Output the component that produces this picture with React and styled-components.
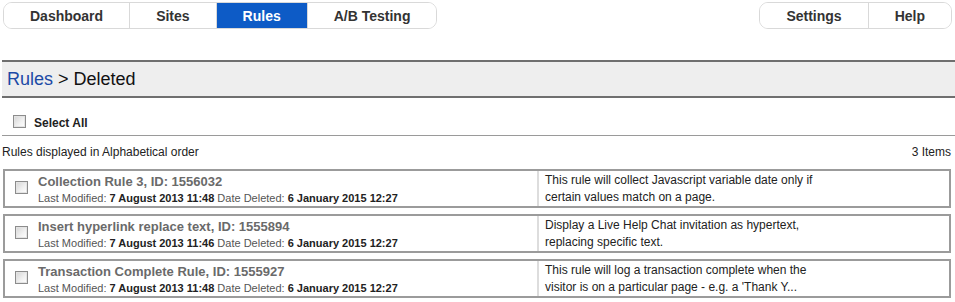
import styled, { createGlobalStyle } from "styled-components"

const GlobalStyle = createGlobalStyle`
    body {
        margin: 0;
        font-family: "Liberation Sans", Arial, sans-serif;
        color: #222222;
        background: #ffffff;
        overflow: hidden;
    }
`

const rules = [
    {
        name: 'Collection Rule 3, ID: 1556032',
        modified: '7 August 2013 11:48',
        deleted: '6 January 2015 12:27',
        description: 'This rule will collect Javascript variable date only if certain values match on a page.'
    },
    {
        name: 'Insert hyperlink replace text, ID: 1555894',
        modified: '7 August 2013 11:46',
        deleted: '6 January 2015 12:27',
        description: 'Display a Live Help Chat invitation as hypertext, replacing specific text.'
    },
    {
        name: 'Transaction Complete Rule, ID: 1555927',
        modified: '7 August 2013 11:48',
        deleted: '6 January 2015 12:27',
        description: "This rule will log a transaction complete when the visitor is on a particular page - e.g. a 'Thank Y..."
    }
]

export default function App() {
    return (
        <>
            <GlobalStyle />
            <Page>
                <Nav>
                    <TabGroup>
                        <Tab>Dashboard</Tab>
                        <Tab>Sites</Tab>
                        <Tab active>Rules</Tab>
                        <Tab>A/B Testing</Tab>
                    </TabGroup>
                    <TabGroup>
                        <Tab>Settings</Tab>
                        <Tab>Help</Tab>
                    </TabGroup>
                </Nav>

                <TitleBar>
                    <Crumb>Rules</Crumb> &gt; Deleted
                </TitleBar>

                <SelectRow>
                    <Checkbox />
                    <span>Select All</span>
                </SelectRow>

                <InfoRow>
                    <span>Rules displayed in Alphabetical order</span>
                    <span>3 Items</span>
                </InfoRow>

                <RuleList>
                    {rules.map((rule) => (
                        <RuleRow key={rule.name}>
                            <RuleMain>
                                <RowCheck>
                                    <Checkbox />
                                </RowCheck>
                                <div>
                                    <RuleName>{rule.name}</RuleName>
                                    <RuleMeta>
                                        Last Modified: <b>{rule.modified}</b> Date Deleted: <b>{rule.deleted}</b>
                                    </RuleMeta>
                                </div>
                            </RuleMain>
                            <RuleDesc>
                                <p>{rule.description}</p>
                            </RuleDesc>
                        </RuleRow>
                    ))}
                </RuleList>
            </Page>
        </>
    )
}

const Page = styled.div`
    width: 955px;
    padding-top: 2px;
`

const Nav = styled.div`
    display: flex;
    justify-content: space-between;
    padding: 0 3px 0 3px;
`

const TabGroup = styled.div`
    display: flex;
    border: 1px solid #d9d9d9;
    border-radius: 9px;
    overflow: hidden;
    height: 25px;
`

const Tab = styled.div`
    display: flex;
    align-items: center;
    padding: 0 26px;
    font-size: 14px;
    font-weight: bold;
    color: ${props => props.active ? '#ffffff' : '#333333'};
    background-color: ${props => props.active ? '#0d5bc6' : '#ffffff'};
    border-left: 1px solid #d9d9d9;
    &:first-child {
        border-left: none;
    }
`

const TitleBar = styled.div`
    margin: 31px 0 0 2px;
    height: 34px;
    border-top: 2px solid #6f6f6f;
    border-bottom: 2px solid #6f6f6f;
    background-color: #eeeeee;
    display: flex;
    align-items: center;
    padding-left: 5px;
    font-size: 18px;
    color: #111111;
    white-space: pre;
`

const Crumb = styled.span`
    color: #1c4aa6;
`

const SelectRow = styled.div`
    margin: 15px 0 0 2px;
    display: flex;
    align-items: center;
    gap: 8px;
    padding: 0 0 5px 11px;
    border-bottom: 1px solid #9a9a9a;
    font-size: 12px;
    font-weight: bold;
    color: #222222;
    > span {
        padding-top: 3px;
    }
`

const Checkbox = styled.span`
    display: inline-block;
    box-sizing: border-box;
    width: 13px;
    height: 13px;
    border: 1px solid #8c8c8c;
    background: linear-gradient(135deg, #d4d4d4 0%, #f2f2f2 60%, #ffffff 100%);
    box-shadow: inset 0 0 0 1px #e4e4e4;
`

const InfoRow = styled.div`
    display: flex;
    justify-content: space-between;
    padding: 9px 4px 0 2px;
    font-size: 12px;
    color: #222222;
`

const RuleList = styled.div`
    display: flex;
    flex-direction: column;
    gap: 6px;
    margin: 10px 4px 0 3px;
`

const RuleRow = styled.div`
    display: flex;
    border: 2px solid #9b9b9b;
    height: 35px;
`

const RuleMain = styled.div`
    flex: 0 0 532px;
    display: flex;
    padding-top: 2px;
`

const RowCheck = styled.div`
    padding: 7px 10px 0 10px;
`

const RuleName = styled.div`
    font-size: 13px;
    font-weight: bold;
    color: #6a6a6a;
    line-height: 17px;
`

const RuleMeta = styled.div`
    font-size: 11px;
    color: #555555;
    line-height: 16px;
    white-space: nowrap;
    > b {
        color: #222222;
    }
`

const RuleDesc = styled.div`
    flex: 1;
    border-left: 2px solid #dddddd;
    padding: 1px 0 0 6px;
    > p {
        margin: 0;
        width: 285px;
        font-size: 12px;
        line-height: 17px;
        color: #222222;
    }
`
